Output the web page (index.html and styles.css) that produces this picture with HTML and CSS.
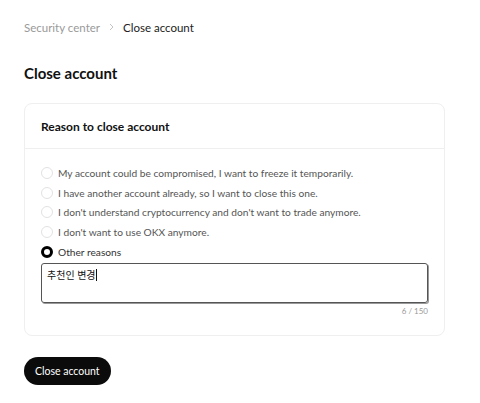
FILE: index.html
```html
<!DOCTYPE html>
<html lang="en">
  <head>
    <meta charset="UTF-8" />
    <meta name="viewport" content="width=device-width, initial-scale=1.0" />
    <title>Close account</title>
    <link rel="stylesheet" href="styles.css">
  </head>
  <body>
    <div class="page">
      <nav class="crumbs">
        <span class="crumb-link">Security center</span>
        <svg class="crumb-sep" width="5" height="8" viewBox="0 0 5 8"><path d="M1 1l3 3-3 3" fill="none" stroke="#c4c4c4" stroke-width="1"/></svg>
        <span class="crumb-current">Close account</span>
      </nav>

      <h1 class="title">Close account</h1>

      <div class="card">
        <div class="card-head">Reason to close account</div>
        <div class="card-body">
          <label class="option"><span class="radio"></span>My account could be compromised, I want to freeze it temporarily.</label>
          <label class="option"><span class="radio"></span>I have another account already, so I want to close this one.</label>
          <label class="option"><span class="radio"></span>I don't understand cryptocurrency and don't want to trade anymore.</label>
          <label class="option"><span class="radio"></span>I don't want to use OKX anymore.</label>
          <label class="option checked"><span class="radio"></span>Other reasons</label>

          <div class="note">추천인 변경<span class="caret"></span></div>
          <div class="count">6 / 150</div>
        </div>
      </div>

      <button class="btn">Close account</button>
    </div>
  </body>
</html>
```

FILE: styles.css
```css
* {
  box-sizing: border-box;
  font-family: Lato, "Noto Sans CJK KR", sans-serif;
}

body {
  margin: 0;
  background-color: #fff;
  color: #111;
}

.page {
  padding: 19px 24px;
}

.crumbs {
  display: flex;
  align-items: center;
  gap: 9px;
  height: 16px;
  font-size: 11.5px;
}

.crumb-link {
  color: #9a9a9a;
}

.crumb-current {
  color: #222;
}

.title {
  margin: 29px 0 0;
  font-size: 15px;
  line-height: 18px;
  font-weight: 700;
}

.card {
  margin-top: 21px;
  width: 421px;
  border: 1px solid #efefef;
  border-radius: 8px;
}

.card-head {
  height: 45px;
  padding: 0 16px;
  display: flex;
  align-items: center;
  font-size: 12px;
  font-weight: 700;
  border-bottom: 1px solid #efefef;
}

.card-body {
  padding: 14px 16px 19px;
}

.option {
  display: flex;
  align-items: center;
  gap: 5px;
  height: 19.7px;
  font-size: 10.2px;
  color: #555;
}

.radio {
  width: 12px;
  height: 12px;
  border: 1px solid #e2e2e2;
  border-radius: 50%;
}

.option.checked {
  color: #333;
}

.option.checked .radio {
  border: 3px solid #000;
}

.note {
  margin-top: 2px;
  height: 40px;
  padding: 3px 5px;
  border: 1px solid #555;
  border-radius: 3px;
  box-shadow: 1px 1px 0 #999;
  font-size: 10px;
  line-height: 16px;
  color: #111;
}

.caret {
  display: inline-block;
  width: 1px;
  height: 12px;
  background-color: #111;
  vertical-align: -2px;
}

.count {
  margin-top: 3px;
  text-align: right;
  font-size: 8px;
  color: #999;
}

.btn {
  margin-top: 21px;
  height: 28px;
  padding: 0 11px;
  border: none;
  border-radius: 14px;
  background-color: #0b0b0b;
  color: #fff;
  font-size: 10.5px;
  cursor: pointer;
}
```
